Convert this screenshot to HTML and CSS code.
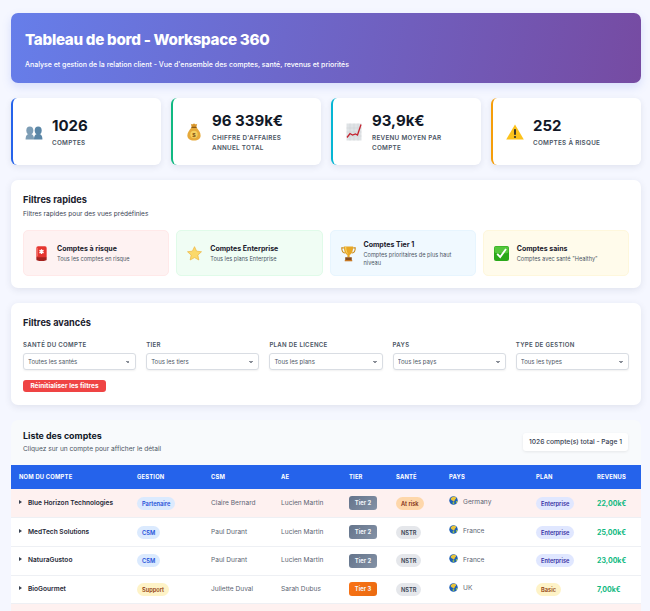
FILE: index.html
```html
<!DOCTYPE html>
<html lang="fr">
<head>
<meta charset="utf-8">
<title>Tableau de bord - Workspace 360</title>
<link rel="stylesheet" href="styles.css">
</head>
<body>
<svg class="defs" width="0" height="0" aria-hidden="true">
  <symbol id="globe" viewBox="0 0 16 16">
    <circle cx="8" cy="8" r="7.500" fill="#1c5fb8"/>
    <path d="M3 4.500C5 1.500 9 .8 12 2.200c1 1.500.6 3-.8 3.600C10 6.400 10.600 8.600 9 9.600 7.600 10.400 7 8.600 5.600 8 4.400 7.600 3 6.400 3 4.500Z" fill="#e8c33a"/>
    <path d="M6.500 11c1.500-.6 3 0 3.200 1.200.1 1.200-1 2.400-2 2.600-.8-.8-1.600-2.400-1.200-3.800Z" fill="#9ac24a"/>
    <path d="M12.500 9.500c1-.6 2-.6 2.500-.3-.3 1.500-1 2.800-2 3.500-.8-.7-1.200-2.400-.5-3.200Z" fill="#9ac24a"/>
  </symbol>
</svg>
<main class="page">
  <header class="hero">
    <h1>Tableau de bord - Workspace 360</h1>
    <p>Analyse et gestion de la relation client - Vue d'ensemble des comptes, santé, revenus et priorités</p>
  </header>

  <section class="stats">
    <article class="stat stat-blue">
      <svg class="stat-icon" viewBox="0 0 18 18"><g fill="#7d9db5"><ellipse cx="4.800" cy="7.500" rx="3.500" ry="4"/><path d="M.6 16.500c0-3.500 1-5.500 4.200-5.500S9 13 9 16.500Z"/></g><g fill="#5a86a6"><ellipse cx="13.200" cy="7.500" rx="3.500" ry="4"/><path d="M9 16.500c0-3.500 1-5.500 4.200-5.500s4.200 2 4.200 5.500Z"/></g></svg>
      <div><div class="stat-value">1026</div><div class="stat-label">Comptes</div></div>
    </article>
    <article class="stat stat-green">
      <svg class="stat-icon" viewBox="0 0 18 18"><g transform="translate(2 0)"><path d="M4.500 4.500C1.800 7.500.4 10 .4 12.500.4 16 3 17.500 7 17.500s6.600-1.500 6.600-5c0-2.500-1.400-5-4.100-8Z" fill="#e6a93a"/><path d="M3.800.8 5 1.500 7 .6l2 .9 1.200-.7-1 3.800H4.800Z" fill="#d9962a"/><rect x="4.300" y="3.800" width="5.400" height="1.300" rx=".6" fill="#8a5a14"/><circle cx="7" cy="11.500" r="3.700" fill="#f4cf5e"/><text x="7" y="13.700" class="svg-dollar">$</text></g></svg>
      <div><div class="stat-value">96 339k€</div><div class="stat-label">Chiffre d'affaires annuel total</div></div>
    </article>
    <article class="stat stat-cyan">
      <svg class="stat-icon" viewBox="0 0 18 18"><g transform="translate(1 0)"><rect x=".5" y=".5" width="15" height="17" fill="#dfe3e6"/><path d="M4 .5v17M8 .5v17M12 .5v17M.5 5h15M.5 9h15M.5 13h15" stroke="#c9ced2" stroke-width=".5"/><path d="M1 14.500 4 10.500 6.500 12 9.500 11 11.500 12 15 1.500" fill="none" stroke="#c4232f" stroke-width="1.300"/></g></svg>
      <div><div class="stat-value">93,9k€</div><div class="stat-label">Revenu moyen par compte</div></div>
    </article>
    <article class="stat stat-amber">
      <svg class="stat-icon" viewBox="0 0 18 16"><path d="M9 .5 17.800 15.500H.2Z" fill="#fcc21b"/><rect x="8.100" y="5" width="1.800" height="6" rx=".8" fill="#2b2b2b"/><circle cx="9" cy="13" r="1.100" fill="#2b2b2b"/></svg>
      <div><div class="stat-value">252</div><div class="stat-label">Comptes à risque</div></div>
    </article>
  </section>

  <section class="panel quick">
    <h2>Filtres rapides</h2>
    <p class="panel-sub">Filtres rapides pour des vues prédéfinies</p>
    <div class="tiles">
      <a class="tile tile-red">
        <svg class="tile-icon" viewBox="0 0 16 17"><rect x="2.500" y=".8" width="11" height="13" rx="1.800" fill="#e5352f"/><path d="M2.500 12.500h11V15c0 1-1.500 1.600-5.500 1.600S2.500 16 2.500 15Z" fill="#a4231f"/><path d="M8 4v5M5.800 5.200l4.400 2.600M10.200 5.200 5.800 7.800" stroke="#fff" stroke-width="1.400"/><path d="M3.700 2.500v9" stroke="#f47a70" stroke-width=".8"/></svg>
        <div><strong>Comptes à risque</strong><span>Tous les comptes en risque</span></div>
      </a>
      <a class="tile tile-green">
        <svg class="tile-icon" viewBox="0 0 18 18"><path d="M9 .8l2.500 5.400 5.900.7-4.400 4 1.200 5.900L9 13.900 3.800 16.800 5 10.900.6 6.900l5.900-.7Z" fill="#fbd96b" stroke="#eeb23a" stroke-width=".8" stroke-linejoin="round"/></svg>
        <div><strong>Comptes Enterprise</strong><span>Tous les plans Enterprise</span></div>
      </a>
      <a class="tile tile-blue">
        <svg class="tile-icon" viewBox="0 0 16 17"><path d="M3 2.500H.8c0 3 1 5 3.500 5.500M13 2.500h2.200c0 3-1 5-3.500 5.500" fill="none" stroke="#c98a1b" stroke-width="1.100"/><path d="M3 1h10c0 5-1.500 8-3.800 9v2.500H6.800V10C4.500 9 3 6 3 1Z" fill="#e9a825"/><path d="M5 1.500c0 3.500.8 6 2 7" fill="none" stroke="#f9dd7a" stroke-width="1"/><rect x="4.500" y="12.500" width="7" height="3.500" fill="#8a4e1a"/><rect x="4" y="15.500" width="8" height="1.300" fill="#c9781f"/></svg>
        <div><strong>Comptes Tier 1</strong><span>Comptes prioritaires de plus haut niveau</span></div>
      </a>
      <a class="tile tile-yellow">
        <svg class="tile-icon" viewBox="0 0 16 16"><rect width="16" height="16" rx="2.200" fill="#2aa81a"/><rect x=".6" y=".6" width="14.800" height="7" rx="1.800" fill="#54c63c"/><path d="M3.400 8.300 6.600 11.800 12.800 3.200" fill="none" stroke="#fff" stroke-width="2"/></svg>
        <div><strong>Comptes sains</strong><span>Comptes avec santé "Healthy"</span></div>
      </a>
    </div>
  </section>

  <section class="panel advanced">
    <h2>Filtres avancés</h2>
    <div class="filters">
      <label class="filter"><span>Santé du compte</span><select><option>Toutes les santés</option></select></label>
      <label class="filter"><span>Tier</span><select><option>Tous les tiers</option></select></label>
      <label class="filter"><span>Plan de licence</span><select><option>Tous les plans</option></select></label>
      <label class="filter"><span>Pays</span><select><option>Tous les pays</option></select></label>
      <label class="filter"><span>Type de gestion</span><select><option>Tous les types</option></select></label>
    </div>
    <button class="reset" type="button">Réinitialiser les filtres</button>
  </section>

  <section class="list">
    <div class="list-head">
      <div>
        <h2>Liste des comptes</h2>
        <p>Cliquez sur un compte pour afficher le détail</p>
      </div>
      <div class="total">1026 compte(s) total - Page 1</div>
    </div>
    <table>
      <colgroup>
        <col class="c-name"><col class="c-gestion"><col class="c-csm"><col class="c-ae"><col class="c-tier"><col class="c-sante"><col class="c-pays"><col class="c-plan"><col class="c-rev">
      </colgroup>
      <thead>
        <tr><th>Nom du compte</th><th>Gestion</th><th>CSM</th><th>AE</th><th>Tier</th><th>Santé</th><th>Pays</th><th>Plan</th><th>Revenus</th></tr>
      </thead>
      <tbody>
        <tr class="risk">
          <td class="name"><span class="caret"></span>Blue Horizon Technologies</td>
          <td><span class="pill p-blue">Partenaire</span></td>
          <td>Claire Bernard</td><td>Lucien Martin</td>
          <td><span class="tier t-2">Tier 2</span></td>
          <td><span class="pill p-orange">At risk</span></td>
          <td><span class="country"><svg class="globe"><use href="#globe"/></svg>Germany</span></td>
          <td><span class="pill p-indigo">Enterprise</span></td>
          <td class="rev">22,00k€</td>
        </tr>
        <tr>
          <td class="name"><span class="caret"></span>MedTech Solutions</td>
          <td><span class="pill p-blue">CSM</span></td>
          <td>Paul Durant</td><td>Lucien Martin</td>
          <td><span class="tier t-2">Tier 2</span></td>
          <td><span class="pill p-gray">NSTR</span></td>
          <td><span class="country"><svg class="globe"><use href="#globe"/></svg>France</span></td>
          <td><span class="pill p-indigo">Enterprise</span></td>
          <td class="rev">25,00k€</td>
        </tr>
        <tr>
          <td class="name"><span class="caret"></span>NaturaGustoo</td>
          <td><span class="pill p-blue">CSM</span></td>
          <td>Paul Durant</td><td>Lucien Martin</td>
          <td><span class="tier t-2">Tier 2</span></td>
          <td><span class="pill p-gray">NSTR</span></td>
          <td><span class="country"><svg class="globe"><use href="#globe"/></svg>France</span></td>
          <td><span class="pill p-indigo">Enterprise</span></td>
          <td class="rev">23,00k€</td>
        </tr>
        <tr>
          <td class="name"><span class="caret"></span>BioGourmet</td>
          <td><span class="pill p-yellow">Support</span></td>
          <td>Juliette Duval</td><td>Sarah Dubus</td>
          <td><span class="tier t-3">Tier 3</span></td>
          <td><span class="pill p-gray">NSTR</span></td>
          <td><span class="country"><svg class="globe"><use href="#globe"/></svg>UK</span></td>
          <td><span class="pill p-yellow">Basic</span></td>
          <td class="rev">7,00k€</td>
        </tr>
        <tr class="risk"><td colspan="9" class="spacer"></td></tr>
      </tbody>
    </table>
  </section>
</main>
</body>
</html>
```
FILE: styles.css
```css
* { box-sizing: border-box; }
html, body { margin: 0; padding: 0; height: 611px; overflow: hidden; }
body { background: #f5f7ff; font-family: "Inter", sans-serif; color: #1a202c; }
.defs { position: absolute; }
h1, h2, p { margin: 0; }
.page { padding: 13px 9px 0 11px; display: flex; flex-direction: column; }

.hero { height: 70px; border-radius: 7px; padding: 16px 14px; color: #fff; background: linear-gradient(100deg, #667eea 0%, #764ba2 100%); box-shadow: 0 4px 10px rgba(102,126,234,.2); }
.hero h1 { font: 800 15.200px/22px "Inter", sans-serif; letter-spacing: -.3px; }
.hero p { margin-top: 8px; font: 500 7px/11px "Inter", sans-serif; }

.stats { margin-top: 15px; display: grid; grid-template-columns: repeat(4, 1fr); gap: 10px; }
.stat { height: 67px; background: #fff; border-radius: 6px; border-left: 2px solid; padding: 0 12px; display: flex; align-items: center; gap: 9px; box-shadow: 0 2px 6px rgba(40,50,90,.1); }
.stat-blue { border-color: #2563eb; }
.stat-green { border-color: #10b981; }
.stat-cyan { border-color: #06b6d4; }
.stat-amber { border-color: #f59e0b; }
.stat-amber .stat-icon { margin-left: 1px; }
.stat-icon { width: 18px; height: 18px; flex: none; }
.stat-value { font: 700 15px/21px "Inter", sans-serif; color: #111827; }
.stat-label { margin-top: 2px; font: 600 6.300px/10px "Inter", sans-serif; letter-spacing: .3px; color: #4b5563; text-transform: uppercase; }
.svg-dollar { font: 700 6px "Liberation Sans", sans-serif; fill: #7a4a10; text-anchor: middle; }

.panel { background: #fff; border-radius: 7px; padding: 13px 12px; box-shadow: 0 2px 7px rgba(40,50,90,.1); }
.panel h2 { font: 700 9.200px/13px "Inter", sans-serif; color: #1a202c; }
.panel-sub { margin-top: 3px; font: 400 6.500px/11px "Inter", sans-serif; color: #374151; }

.quick { margin-top: 15px; height: 108px; }
.tiles { margin-top: 10px; display: grid; grid-template-columns: repeat(4, 1fr); gap: 7px; }
.tile { height: 46px; border-radius: 5px; padding: 0 10px; display: flex; align-items: center; gap: 8px; border: 1px solid; }
.tile-red { background: #fef2f2; border-color: #ffe9e9; }
.tile-green { background: #f0fdf4; border-color: #e0fbe9; }
.tile-blue { background: #f0f9ff; border-color: #e7f5fe; }
.tile-yellow { background: #fffbeb; border-color: #fef7dc; }
.tile-icon { width: 15px; height: 17px; flex: none; }
.tile strong { display: block; font: 700 7px/11px "Inter", sans-serif; color: #1a202c; }
.tile span { display: block; margin-top: 1px; font: 400 5.600px/8px "Inter", sans-serif; color: #4b5563; }

.advanced { margin-top: 15px; height: 102px; padding-top: 13px; }
.filters { margin-top: 11px; display: grid; grid-template-columns: repeat(5, 1fr); gap: 10px; }
.filter { display: flex; flex-direction: column; }
.filter span { font: 600 6.100px/10px "Inter", sans-serif; letter-spacing: .3px; color: #4b5563; text-transform: uppercase; }
.filter select { appearance: none; margin-top: 3px; height: 17px; padding: 0 4px; font: 400 6px "Inter", sans-serif; color: #4b5563; background-color: #fff; background-image: linear-gradient(45deg, transparent 50%, #8a8f98 50%), linear-gradient(-45deg, transparent 50%, #8a8f98 50%); background-size: 2px 2px, 2px 2px; background-position: calc(100% - 7px) 50%, calc(100% - 5px) 50%; background-repeat: no-repeat; border: 1px solid #d9dde3; border-radius: 3px; box-shadow: 0 1px 2px rgba(0,0,0,.06); }
.reset { margin-top: 10px; display: block; height: 12px; width: 83px; padding: 0; border: 0; border-radius: 3px; background: #ef4444; color: #fff; font: 700 6.500px/12px "Inter", sans-serif; }

.list { margin-top: 15px; background: #f8fafc; border-radius: 7px 7px 0 0; }
.list-head { height: 45px; padding: 9px 13px 0 12px; display: flex; justify-content: space-between; align-items: flex-start; }
.list-head h2 { font: 700 8.900px/14px "Inter", sans-serif; color: #111827; }
.list-head p { margin-top: 1px; font: 400 6.600px/11px "Inter", sans-serif; color: #4b5563; }
.total { margin-top: 4px; height: 18px; padding: 0 6px; background: #fff; border-radius: 3px; font: 500 6.700px/18px "Inter", sans-serif; color: #374151; box-shadow: 0 1px 3px rgba(0,0,0,.08); }

table { width: 100%; border-collapse: collapse; table-layout: fixed; background: #fff; }
.c-name { width: 118px; } .c-gestion { width: 74px; } .c-csm { width: 70px; } .c-ae { width: 68px; }
.c-tier { width: 47px; } .c-sante { width: 53px; } .c-pays { width: 87px; } .c-plan { width: 61px; } .c-rev { width: 52px; }
th { height: 24px; padding: 0 0 0 8px; background: #2563eb; color: #fff; text-align: left; font: 700 5.800px/1 "Inter", sans-serif; letter-spacing: .2px; text-transform: uppercase; }
td { height: 28.700px; padding: 0 0 0 8px; border-bottom: 1px solid #eef0f4; font: 400 6.600px/1 "Inter", sans-serif; color: #5b6472; white-space: nowrap; }
.risk td { background: #fef1f0; }
.spacer { height: 10px; border: 0; }
.name { font-weight: 600; color: #1f2937; }
.caret { display: inline-block; margin-right: 6px; vertical-align: 1px; border-left: 3px solid #374151; border-top: 2px solid transparent; border-bottom: 2px solid transparent; }
.pill { display: inline-block; padding: 0 5px; height: 13px; border-radius: 7px; font: 600 5.700px/13px "Inter", sans-serif; vertical-align: middle; }
.p-blue { background: #dbeafe; color: #1d4ed8; }
.p-orange { background: #fed7aa; color: #7c2d12; }
.p-gray { background: #e5e7eb; color: #374151; }
.p-indigo { background: #e0e7ff; color: #3730a3; }
.p-yellow { background: #fef3c7; color: #92400e; }
.tier { display: inline-block; width: 28px; height: 14px; border-radius: 3px; text-align: center; color: #f1f5f9; font: 700 5.800px/14px "Inter", sans-serif; vertical-align: middle; }
.t-2 { background: linear-gradient(135deg, #64748b, #8492a6); }
.t-3 { background: linear-gradient(135deg, #f97316, #ea6a10); }
.country { display: inline-flex; align-items: center; gap: 5px; }
.globe { width: 9px; height: 9px; margin-top: -3px; }
.rev { font-weight: 700; color: #10b981; font-size: 7px; }
```
